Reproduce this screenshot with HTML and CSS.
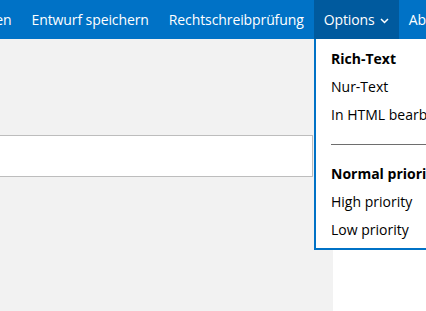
FILE: index.html
```html
<!DOCTYPE html>
<html lang="de">
<head>
<meta charset="UTF-8">
<meta name="viewport" content="width=device-width, initial-scale=1.0">
<title>Nachricht verfassen</title>
<link rel="stylesheet" href="styles.css">
</head>
<body>

<div class="page">
  <div class="toolbar">
    <a class="tool first">Senden</a>
    <a class="tool">Entwurf speichern</a>
    <a class="tool">Rechtschreibprüfung</a>
    <a class="tool active">Options
      <svg class="chev" width="9" height="6" viewBox="0 0 9 6"><path d="M1 1 L4.5 4.5 L8 1" fill="none" stroke="#fff" stroke-width="1.5"/></svg>
    </a>
    <a class="tool">Abbrechen</a>
  </div>

  <div class="main">
    <div class="compose">
      <div class="field"></div>
    </div>
    <div class="side"></div>
  </div>

  <div class="menu">
    <div class="item bold">Rich-Text</div>
    <div class="item">Nur-Text</div>
    <div class="item">In HTML bearbeiten</div>
    <div class="sep"></div>
    <div class="item bold">Normal priority</div>
    <div class="item">High priority</div>
    <div class="item">Low priority</div>
  </div>
</div>

</body>
</html>
```

FILE: styles.css
```css
* {
  box-sizing: border-box;
  padding: 0;
  margin: 0;
}

html, body {
  height: 100%;
  width: 100%;
  overflow: hidden;
}

body {
  font-family: "Open Sans", "Noto Sans", sans-serif;
  font-size: 14px;
  color: #000;
  background: #fff;
}

.page {
  position: relative;
  height: 100%;
}

.toolbar {
  height: 39px;
  background: #0072c6;
  display: flex;
  align-items: center;
  white-space: nowrap;
  letter-spacing: -0.1px;
}

.tool {
  color: #fff;
  height: 39px;
  display: flex;
  align-items: center;
  padding: 0 10px;
  cursor: pointer;
}

.tool.first {
  margin-left: -47px;
}

.tool.active {
  background: #005a9e;
}

.chev {
  margin-left: 5px;
  margin-top: 2px;
}

.main {
  display: flex;
  height: calc(100% - 39px);
}

.compose {
  width: 333px;
  background: #f2f2f2;
  padding: 96px 20px 0 0;
}

.field {
  margin-left: -10px;
  height: 42px;
  background: #fff;
  border: 1px solid #bdbdbd;
}

.side {
  flex: 1;
}

.menu {
  position: absolute;
  left: 314px;
  top: 39px;
  width: 190px;
  background: #fff;
  border-left: 2px solid #0072c6;
  border-bottom: 2px solid #0072c6;
  padding: 6px 0 4px 15px;
  white-space: nowrap;
}

.item {
  height: 28px;
  line-height: 28px;
}

.bold {
  font-weight: 700;
}

.sep {
  height: 1px;
  background: #6e6e6e;
  margin: 15px 0;
}
```
